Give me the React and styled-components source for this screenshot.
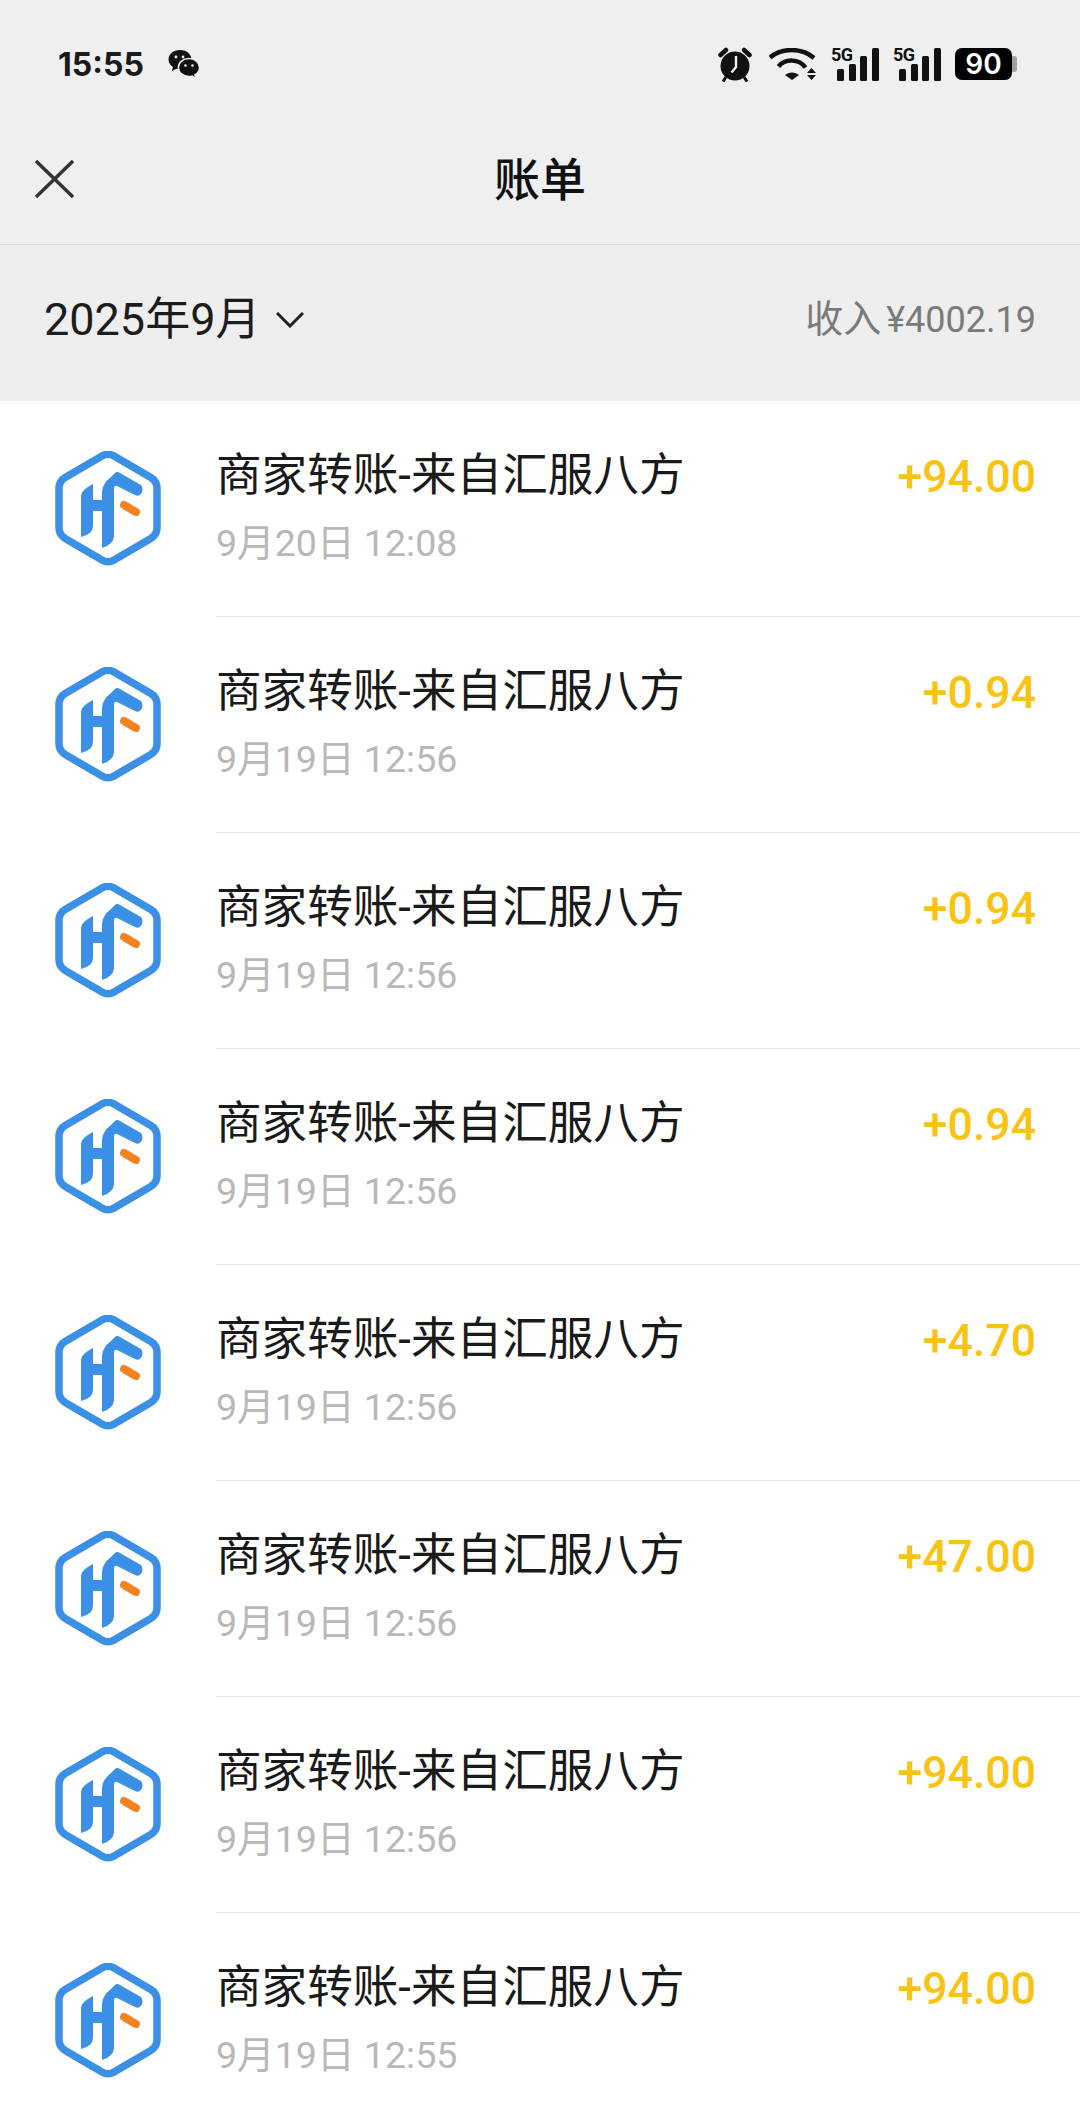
import React from "react";
import styled, { createGlobalStyle } from "styled-components";

const GlobalStyle = createGlobalStyle`
  html, body {
    margin: 0;
    padding: 0;
    background: #ffffff;
  }
  * {
    box-sizing: border-box;
  }
`;

const Page = styled.div`
  width: 1080px;
  height: 2120px;
  overflow: hidden;
  background: #ffffff;
  font-family: "Roboto", "Noto Sans CJK SC", sans-serif;
`;

const StatusBar = styled.div`
  height: 130px;
  padding: 0 63px 2px 58px;
  background: #efefef;
  display: flex;
  align-items: center;
  justify-content: space-between;
`;

const StatusLeft = styled.div`
  display: flex;
  align-items: center;
  gap: 24px;
`;

const Time = styled.span`
  font-family: "Inter", sans-serif;
  font-size: 32px;
  font-weight: 700;
  color: #1a1a1a;
`;

const StatusRight = styled.div`
  display: flex;
  align-items: center;
  gap: 14px;
`;

const SignalBox = styled.div`
  width: 48px;
  height: 33px;
  position: relative;
`;

const SignalLabel = styled.span`
  position: absolute;
  left: 0;
  top: -2px;
  font-family: "Roboto", sans-serif;
  font-size: 18px;
  line-height: 18px;
  font-weight: 700;
  letter-spacing: -0.5px;
  color: #111111;
`;

const Battery = styled.div`
  width: 57px;
  height: 32px;
  margin-right: 5px;
  border-radius: 7px;
  background: #000000;
  color: #ffffff;
  font-family: "Inter", sans-serif;
  font-size: 28px;
  font-weight: 600;
  display: flex;
  align-items: center;
  justify-content: center;
  position: relative;

  &::after {
    content: "";
    position: absolute;
    left: 100%;
    top: 8px;
    width: 5px;
    height: 16px;
    border-radius: 0 3px 3px 0;
    background: #a0a0a0;
  }
`;

const NavBar = styled.div`
  height: 115px;
  padding: 0 34px 17px;
  background: #efefef;
  border-bottom: 1px solid #d9d9d9;
  display: grid;
  grid-template-columns: 1fr auto 1fr;
  align-items: center;
`;

const CloseButton = styled.div`
  display: flex;
  align-items: center;
`;

const NavTitle = styled.h1`
  margin: 0 0 5px;
  font-size: 46px;
  font-weight: 500;
  color: #111111;
`;

const FilterBar = styled.div`
  height: 156px;
  padding: 0 44px 16px;
  background: #eeeeee;
  display: flex;
  align-items: center;
  justify-content: space-between;
`;

const MonthPicker = styled.div`
  display: flex;
  align-items: center;
  gap: 16px;
  font-size: 45px;
  color: #1c1c1c;
`;

const ChevronSvg = styled.svg`
  margin-top: 10px;
`;

const Income = styled.div`
  display: flex;
  align-items: baseline;
  gap: 5px;
  font-size: 38px;
  color: #7a7a7a;
`;

const IncomeValue = styled.span`
  font-size: 36px;
`;

const List = styled.div`
  display: flex;
  flex-direction: column;
`;

const Row = styled.div`
  height: 216px;
  padding-left: 55px;
  display: flex;
  align-items: center;
  gap: 55px;
`;

const RowBody = styled.div`
  flex: 1;
  height: 100%;
  padding: 45px 44px 0 0;
  display: flex;
  justify-content: space-between;
  align-items: flex-start;
  border-bottom: ${(props) => (props.$last ? "none" : "1px solid #e8e8e8")};
`;

const RowTitle = styled.div`
  font-size: 45.6px;
  line-height: 60px;
  color: #1a1a1a;
`;

const RowDate = styled.div`
  margin-top: 15px;
  font-size: 37.6px;
  line-height: 44px;
  color: #b8b8b8;
`;

const Amount = styled.div`
  margin-top: 1px;
  font-size: 44.6px;
  line-height: 60px;
  font-weight: 500;
  color: #f9c311;
`;

const AlarmSvg = styled.svg`
  margin-right: 3px;
`;

const CloseIcon = () => (
  <svg width="40" height="40" viewBox="0 0 40 40" fill="none" stroke="#333" strokeWidth="3.4">
    <path d="M2 2 39 38M39 2 2 38" />
  </svg>
);

const Chevron = () => (
  <ChevronSvg width="28" height="16" viewBox="0 0 28 16" fill="none" stroke="#222" strokeWidth="3">
    <path d="M1 1 14 14 27 1" />
  </ChevronSvg>
);

const WeChatIcon = () => (
  <svg width="32" height="28" viewBox="0 0 32 28">
    <path d="M12 0C5.4 0 .5 4.2.5 9.6c0 3.2 1.8 5.7 4.4 7.5l-1 4 4.600-2.300c1.200.3 2.400.5 3.700.5 6.400 0 11.300-4.300 11.300-9.700S18.400 0 12 0Z" fill="#111" />
    <path d="M21 8.500c-6 0-10.600 4-10.600 9s4.600 9 10.600 9c1 0 2-.1 3-.4l4 2.200-1-3.400c2.800-1.700 4.500-4.300 4.500-7.400 0-5-4.500-9-10.500-9Z" fill="#111" stroke="#efefef" strokeWidth="1.500" />
    <circle cx="8" cy="7" r="1.400" fill="#efefef" />
    <circle cx="15" cy="7" r="1.400" fill="#efefef" />
    <circle cx="17.500" cy="15.500" r="1.300" fill="#efefef" />
    <circle cx="24.500" cy="15.500" r="1.300" fill="#efefef" />
  </svg>
);

const AlarmIcon = () => (
  <AlarmSvg width="34" height="35" viewBox="0 0 34 35">
    <circle cx="17" cy="19" r="14.500" fill="#111" />
    <path d="M2.500 8 8 3M31.500 8 26 3" stroke="#111" strokeWidth="4.500" strokeLinecap="round" />
    <path d="M8 30 5 34.500M26 30 29 34.500" stroke="#111" strokeWidth="3" />
    <path d="M18 9v11l-4.500 5.500" fill="none" stroke="#efefef" strokeWidth="2.400" />
  </AlarmSvg>
);

const WifiIcon = () => (
  <svg width="48" height="32" viewBox="0 0 48 32" fill="none">
    <path d="M1 9.500C13-.5 33-.5 45 10" stroke="#111" strokeWidth="4.500" />
    <path d="M9.500 18.500C16 10.500 30 10.500 36.500 19.500" stroke="#111" strokeWidth="4.500" />
    <path d="M23 32 16 27C20 23.500 26 23.500 30 27Z" fill="#111" />
    <path d="M42.500 20l4.500 5H38ZM42.500 32l4.500-5H38Z" fill="#111" />
  </svg>
);

const SignalIcon = () => (
  <SignalBox>
    <svg width="48" height="33" viewBox="0 0 48 33">
      <rect x="6" y="21" width="7" height="12" rx="1.500" fill="#111" />
      <rect x="18" y="16" width="7" height="17" rx="1.500" fill="#111" />
      <rect x="29" y="8" width="7" height="25" rx="1.500" fill="#111" />
      <rect x="41" y="0" width="7" height="33" rx="1.500" fill="#111" />
    </svg>
    <SignalLabel>5G</SignalLabel>
  </SignalBox>
);

const LogoIcon = () => (
  <svg width="106" height="116" viewBox="0 1 106 116" fill="none">
    <path
      d="M47 6Q53 2.500 59 6L95 27Q102 31 102 38V78Q102 85 95 89L59 110Q53 113.500 47 110L11 89Q4 85 4 78V38Q4 31 11 27Z"
      stroke="#3b90e5"
      strokeWidth="7.500"
      strokeLinejoin="round"
    />
    <path
      d="M26 46Q26 40 38 34V50H47V42Q47 34 56 27L60 23Q62 21 65 23L86 35Q89 39 86 44Q83 47 80 45L62 36Q59 35 59 39V86Q59 94 47 98V61H38V76Q38 84 26 87Z"
      fill="#3b90e5"
    />
    <path d="M69 55 81 62" stroke="#f58220" strokeWidth="8" strokeLinecap="round" />
  </svg>
);

const rows = [
  { date: "9月20日 12:08", amount: "+94.00" },
  { date: "9月19日 12:56", amount: "+0.94" },
  { date: "9月19日 12:56", amount: "+0.94" },
  { date: "9月19日 12:56", amount: "+0.94" },
  { date: "9月19日 12:56", amount: "+4.70" },
  { date: "9月19日 12:56", amount: "+47.00" },
  { date: "9月19日 12:56", amount: "+94.00" },
  { date: "9月19日 12:55", amount: "+94.00" },
];

export default function App() {
  return (
    <Page>
      <GlobalStyle />
      <StatusBar>
        <StatusLeft>
          <Time>15:55</Time>
          <WeChatIcon />
        </StatusLeft>
        <StatusRight>
          <AlarmIcon />
          <WifiIcon />
          <SignalIcon />
          <SignalIcon />
          <Battery>90</Battery>
        </StatusRight>
      </StatusBar>
      <NavBar>
        <CloseButton>
          <CloseIcon />
        </CloseButton>
        <NavTitle>账单</NavTitle>
      </NavBar>
      <FilterBar>
        <MonthPicker>
          2025年9月
          <Chevron />
        </MonthPicker>
        <Income>
          收入
          <IncomeValue>¥4002.19</IncomeValue>
        </Income>
      </FilterBar>
      <List>
        {rows.map((row, i) => (
          <Row key={i}>
            <LogoIcon />
            <RowBody $last={i === rows.length - 1}>
              <div>
                <RowTitle>商家转账-来自汇服八方</RowTitle>
                <RowDate>{row.date}</RowDate>
              </div>
              <Amount>{row.amount}</Amount>
            </RowBody>
          </Row>
        ))}
      </List>
    </Page>
  );
}
